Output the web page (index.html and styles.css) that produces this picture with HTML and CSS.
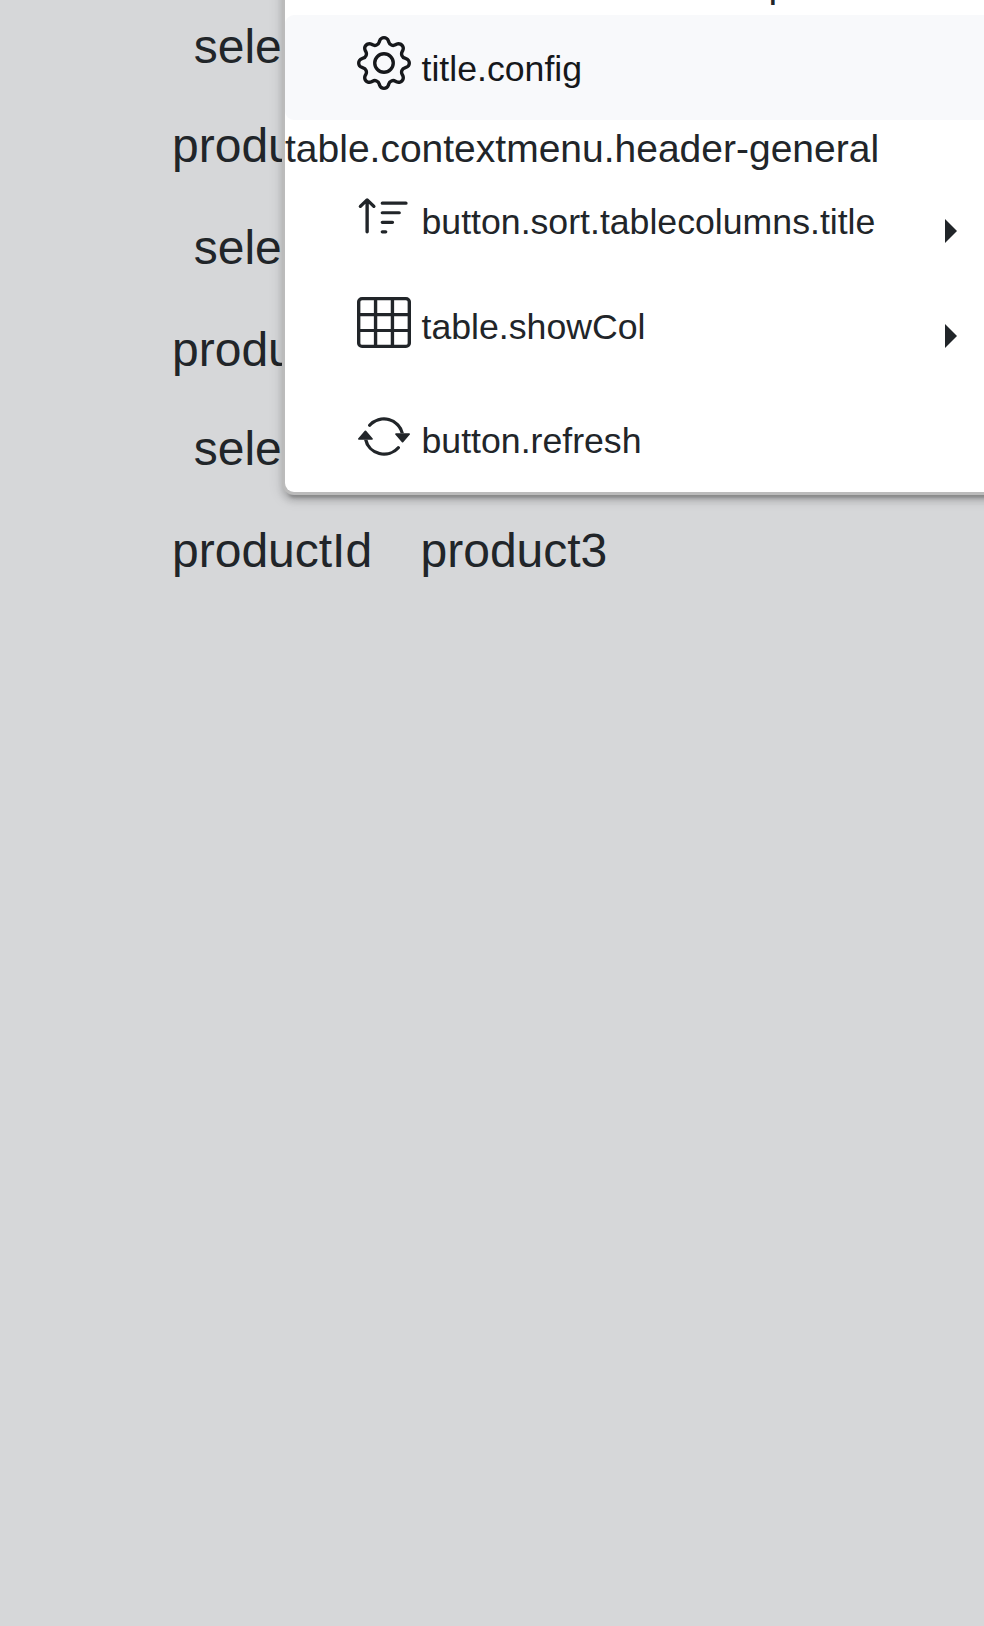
FILE: index.html
```
<!DOCTYPE html>
<html lang="en">
<head>
<meta charset="utf-8">
<title>Table context menu</title>
<link rel="stylesheet" href="styles.css">
</head>
<body>
<main class="page">
  <dl class="products">
    <dt class="select">select</dt><dd></dd>
    <dt>productId</dt><dd>product1</dd>
    <dt class="select">select</dt><dd></dd>
    <dt>productId</dt><dd>product2</dd>
    <dt class="select">select</dt><dd></dd>
    <dt>productId</dt><dd>product3</dd>
  </dl>
  <nav class="menu">
    <div class="heading heading-top">table.contextmenu.header-specific</div>
    <div class="item item-active">
      <svg class="icon icon-gear" viewBox="0 0 16 16"><path d="M8 4.754a3.246 3.246 0 1 0 0 6.492 3.246 3.246 0 0 0 0-6.492zM5.754 8a2.246 2.246 0 1 1 4.492 0 2.246 2.246 0 0 1-4.492 0z"/><path d="M9.796 1.343c-.527-1.79-3.065-1.79-3.592 0l-.094.319a.873.873 0 0 1-1.255.52l-.292-.16c-1.64-.892-3.433.902-2.54 2.541l.159.292a.873.873 0 0 1-.52 1.255l-.319.094c-1.79.527-1.79 3.065 0 3.592l.319.094a.873.873 0 0 1 .52 1.255l-.16.292c-.892 1.64.901 3.434 2.541 2.54l.292-.159a.873.873 0 0 1 1.255.52l.094.319c.527 1.79 3.065 1.79 3.592 0l.094-.319a.873.873 0 0 1 1.255-.52l.292.16c1.64.893 3.434-.902 2.54-2.541l-.159-.292a.873.873 0 0 1 .52-1.255l.319-.094c1.79-.527 1.79-3.065 0-3.592l-.319-.094a.873.873 0 0 1-.52-1.255l.16-.292c.893-1.64-.902-3.433-2.541-2.54l-.292.159a.873.873 0 0 1-1.255-.52l-.094-.319zm-2.633.283c.246-.835 1.428-.835 1.674 0l.094.319a1.873 1.873 0 0 0 2.693 1.115l.291-.16c.764-.415 1.6.42 1.184 1.185l-.159.292a1.873 1.873 0 0 0 1.116 2.692l.318.094c.835.246.835 1.428 0 1.674l-.319.094a1.873 1.873 0 0 0-1.115 2.693l.16.291c.415.764-.42 1.6-1.185 1.184l-.291-.159a1.873 1.873 0 0 0-2.693 1.116l-.094.318c-.246.835-1.428.835-1.674 0l-.094-.319a1.873 1.873 0 0 0-2.692-1.115l-.292.16c-.764.415-1.6-.42-1.184-1.185l.159-.291A1.873 1.873 0 0 0 1.945 8.93l-.319-.094c-.835-.246-.835-1.428 0-1.674l.319-.094A1.873 1.873 0 0 0 3.06 4.377l-.16-.292c-.415-.764.42-1.6 1.185-1.184l.292.159a1.873 1.873 0 0 0 2.692-1.115l.094-.319z"/></svg>
      <span class="label">title.config</span>
    </div>
    <div class="heading">table.contextmenu.header-general</div>
    <div class="item">
      <svg class="icon" viewBox="0 0 16 16" preserveAspectRatio="none"><path d="M3.5 12.5a.5.5 0 0 1-1 0V3.707L1.354 4.854a.5.5 0 1 1-.708-.708l2-1.999.007-.007a.498.498 0 0 1 .7.006l2 2a.5.5 0 1 1-.707.708L3.5 3.707V12.5zm3.5-9a.5.5 0 0 1 .5-.5h7a.5.5 0 0 1 0 1h-7a.5.5 0 0 1-.5-.5zM7.5 6a.5.5 0 0 0 0 1h5a.5.5 0 0 0 0-1h-5zm0 3a.5.5 0 0 0 0 1h3a.5.5 0 0 0 0-1h-3zm0 3a.5.5 0 0 0 0 1h1a.5.5 0 0 0 0-1h-1z"/></svg>
      <span class="label">button.sort.tablecolumns.title</span>
      <span class="caret"></span>
    </div>
    <div class="item item-columns">
      <svg class="icon" viewBox="0 0 16 16" preserveAspectRatio="none"><path fill-rule="evenodd" d="M0 1.5A1.5 1.5 0 0 1 1.5 0h13A1.5 1.5 0 0 1 16 1.5v13a1.5 1.5 0 0 1-1.5 1.5h-13A1.5 1.5 0 0 1 0 14.5v-13zM1.5 1a.5.5 0 0 0-.5.5V5h4V1H1.5zM5 6H1v4h4V6zm1 4h4V6H6v4zm-1 1H1v3.5a.5.5 0 0 0 .5.5H5v-4zm1 0v4h4v-4H6zm5 0v4h3.5a.5.5 0 0 0 .5-.5V11h-4zm0-1h4V6h-4v4zm0-5h4V1.5a.5.5 0 0 0-.5-.5H11v4zm-1 0V1H6v4h4z"/></svg>
      <span class="label">table.showCol</span>
      <span class="caret"></span>
    </div>
    <div class="item">
      <svg class="icon" viewBox="0 0 16 16" preserveAspectRatio="none"><path d="M11.534 7h3.932a.25.25 0 0 1 .192.41l-1.966 2.36a.25.25 0 0 1-.384 0l-1.966-2.36a.25.25 0 0 1 .192-.41zm-11 2h3.932a.25.25 0 0 0 .192-.41L2.692 6.23a.25.25 0 0 0-.384 0L.342 8.59A.25.25 0 0 0 .534 9z"/><path d="M8 3c-1.552 0-2.94.707-3.857 1.818a.5.5 0 1 1-.771-.636A6.002 6.002 0 0 1 13.917 7H12.9A5.002 5.002 0 0 0 8 3zM3.1 9a5.002 5.002 0 0 0 8.757 2.182.5.5 0 1 1 .771.636A6.002 6.002 0 0 1 2.083 9H3.1z"/></svg>
      <span class="label">button.refresh</span>
    </div>
  </nav>
</main>
</body>
</html>
```
FILE: styles.css
```
body {
  margin: 0;
  font-family: "Liberation Sans", Arial, sans-serif;
  color: #212529;
}

.page {
  position: relative;
  height: 1626px;
  overflow: hidden;
  background: #d6d7d9;
}

.products {
  display: grid;
  grid-template-columns: 200px auto;
  grid-template-rows: 99px 102px 102px 99px 102px 72px;
  column-gap: 48.5px;
  margin: 0;
  padding: 11px 0 0 172px;
  font-size: 48px;
  line-height: 72px;
}

.products dt,
.products dd {
  margin: 0;
}

.products .select {
  padding-left: 21.7px;
}

/* Floats over the product list and runs past the right edge. */
.menu {
  position: absolute;
  top: -48px;
  left: 282px;
  width: 800px;
  height: 540px;
  border: 3px solid #bbb;
  border-top: 0;
  border-radius: 0 0 12px 12px;
  background: #fff;
  box-shadow: 0 9px 3px -6px rgba(0, 0, 0, 0.2), 0 6px 6px rgba(0, 0, 0, 0.14), 0 3px 15px rgba(0, 0, 0, 0.12);
}

.heading {
  height: 48px;
  font-size: 39px;
  line-height: 58px;
  white-space: nowrap;
}

.heading-top {
  height: 63px;
  line-height: 63px;
}

.item {
  display: flex;
  align-items: flex-start;
  gap: 10.5px;
  box-sizing: border-box;
  height: 105px;
  padding: 24px 0 0 72px;
  font-size: 35.67px;
  line-height: 60px;
}

.item-active {
  border-radius: 9px;
  background: #f8f9fb;
  color: #16181b;
}

.item-columns {
  height: 114px;
}

.icon {
  flex: none;
  width: 54px;
  height: 51px;
  fill: currentColor;
}

.icon-gear {
  height: 54px;
  margin-top: -3px;
}

.label {
  width: 513px;
  white-space: nowrap;
}

.caret {
  margin-top: 27px;
  border: 12px solid transparent;
  border-left-color: currentColor;
  border-right: 0;
}
```
